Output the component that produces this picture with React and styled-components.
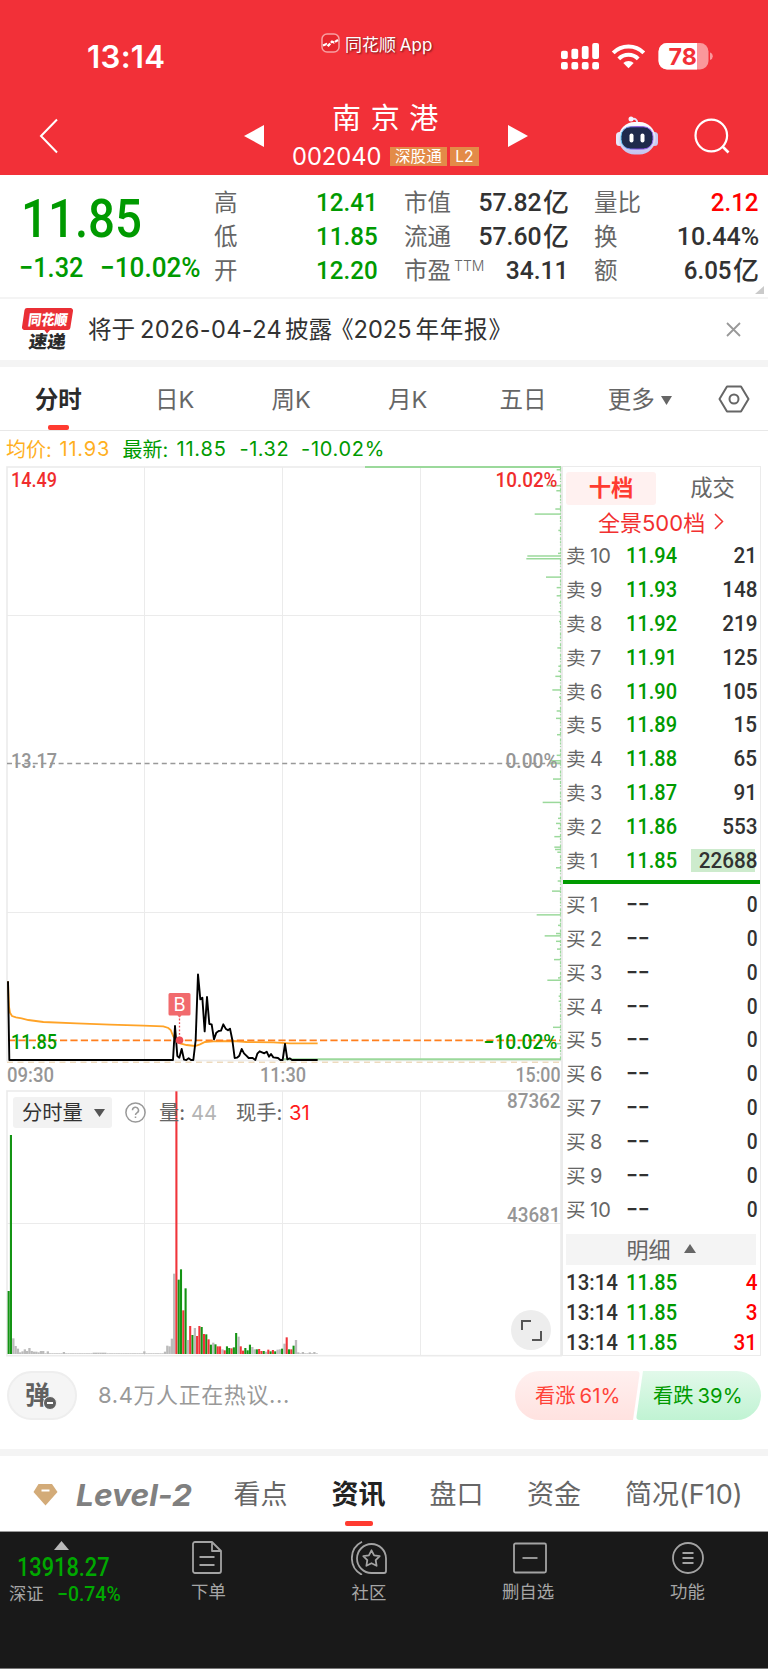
import React from "react";
import styled, { createGlobalStyle, css } from "styled-components";

const GREEN = "#009a00";
const RED = "#ff0000";
const INK = "#323232";
const MUTED = "#666666";
const LINE = "#ebebeb";
const CJK = `"Noto Sans CJK SC", sans-serif`;
const UI = `Inter, "Noto Sans CJK SC", sans-serif`;
const DIGITS = `Roboto, "Noto Sans CJK SC", sans-serif`;

const GlobalStyle = createGlobalStyle`
  * { box-sizing: border-box; }
  body { margin: 0; background: #fff; font-family: ${UI}; color: ${INK}; }
  svg { display: block; flex: none; }
`;

const Screen = styled.div`
  width: 768px;
  height: 1669px;
  display: flex;
  flex-direction: column;
  overflow: hidden;
  background: #fff;
  white-space: nowrap;
`;

const Num = styled.span`
  display: inline-block;
  font-family: ${DIGITS};
  font-weight: ${(p) => p.$weight || 500};
  font-size: ${(p) => p.$size}px;
  line-height: 1;
  color: ${(p) => p.$color || INK};
  transform: scaleX(${(p) => p.$sx || 0.87});
  transform-origin: ${(p) => p.$origin || "left"} center;
`;

/* ---------- header ---------- */
const Header = styled.header`
  height: 175px;
  flex: none;
  background: #f23038;
  color: #fff;
`;
const StatusBar = styled.div`
  height: 90px;
  display: grid;
  grid-template-columns: 87px 234px 240px 1fr;
`;
const Clock = styled.div`
  grid-column: 2;
  padding-top: 38px;
  font-size: 31.2px;
  line-height: 38px;
  letter-spacing: 0.3px;
  font-weight: 600;
`;
const AppTag = styled.div`
  display: flex;
  align-items: center;
  gap: 5px;
  height: 20px;
  margin-top: 33px;
  font-size: 17px;
  text-shadow: 1px 1px 2px rgba(0, 0, 0, 0.55);
  word-spacing: -1px;
`;
const StatusIcons = styled.div`
  padding-top: 43px;
`;
const TitleBar = styled.div`
  height: 85px;
  display: grid;
  grid-template-columns: 39px 205px 20px 244px 20px 88px 42px 80px;
`;
const IconCell = styled.div`
  grid-column: ${(p) => p.$col};
  padding-top: ${(p) => p.$top}px;
`;
const TitleBlock = styled.div`
  grid-column: 4;
  display: flex;
  flex-direction: column;
  align-items: center;
  padding-top: 8px;
`;
const StockName = styled.div`
  font: 400 29px/36px ${CJK};
  letter-spacing: 9.7px;
  margin-right: -8px;
`;
const CodeRow = styled.div`
  display: flex;
  align-items: center;
  height: 20px;
  margin: 12px 0 0 2px;
`;
const Code = styled.span`
  font-size: 23.7px;
  width: 98px;
`;
const Badge = styled.span`
  background: #e38b48;
  font-size: 15.6px;
  line-height: 19px;
  height: 19px;
  padding: 0 5px;
  margin-right: 3.5px;
`;

/* ---------- quote ---------- */
const Quote = styled.section`
  height: 124px;
  flex: none;
  display: grid;
  grid-template-columns: 214px 163.5px 26.5px 165px 25px 165px;
  border-bottom: 2px solid #f4f4f4;
  position: relative;
`;
const Price = styled.div`
  padding: 16px 0 0 21px;
`;
const Changes = styled.div`
  display: flex;
  margin-left: -2px;
  padding-top: 8px;
  ${Num}:first-child { width: 81px; }
`;
const StatCol = styled.div`
  grid-column: ${(p) => p.$col};
  padding-top: 10px;
`;
const Stat = styled.div`
  height: 34px;
  display: flex;
  align-items: center;
  justify-content: space-between;
  font: 400 23.5px/34px ${CJK};
  color: ${MUTED};
`;
const Label = styled.span`
  display: flex;
  padding-bottom: 2px;
`;
const Value = styled.span`
  display: flex;
  align-items: center;
`;
const Unit = styled.span`
  font: 500 26px/32px ${CJK};
  color: ${INK};
  margin: 0 0 2px 1px;
`;
const Sup = styled.small`
  font: 300 14px/14px ${UI};
  padding: 7px 0 0 3px;
`;
const Corner = styled.i`
  position: absolute;
  right: 4px;
  bottom: 3px;
  border-left: 9px solid transparent;
  border-bottom: 8px solid #cacaca;
`;

/* ---------- news ---------- */
const News = styled.section`
  height: 61px;
  flex: none;
  display: flex;
  align-items: center;
  padding-left: 21px;
`;
const NewsText = styled.p`
  margin: 0 0 0 14px;
  flex: 1;
  display: flex;
  align-items: center;
  font-size: 23.6px;
  line-height: 34px;
`;
const NewsPart = styled.span`
  width: ${(p) => p.$w}px;
  letter-spacing: ${(p) => p.$ls || 0}px;
`;
const CloseCell = styled.div`
  width: 42px;
`;
const Band = styled.div`
  height: 7px;
  flex: none;
  background: #f4f4f4;
`;

/* ---------- period tabs ---------- */
const Tabs = styled.nav`
  height: 64px;
  flex: none;
  display: flex;
  border-bottom: 1px solid #e8e8e8;
`;
const Tab = styled.div`
  width: ${(p) => p.$w || 116.5}px;
  display: flex;
  align-items: center;
  justify-content: center;
  flex-direction: column;
  padding-top: 16px;
  font-size: 23.5px;
  line-height: 34px;
  color: ${MUTED};
  ${(p) =>
    p.$active &&
    css`
      color: #2b2b2b;
      font-weight: 700;
    `}
  &::after {
    content: "";
    width: 21px;
    height: 5px;
    margin-top: 8px;
    border-radius: 2px;
    background: ${(p) => (p.$active ? "#ff3b30" : "transparent")};
  }
`;
const MoreLabel = styled.span`
  display: flex;
  align-items: center;
  gap: 6px;
`;
const SettingsCell = styled.div`
  padding: 18px 0 0 18px;
`;

const Legend = styled.div`
  height: 35px;
  flex: none;
  display: flex;
  align-items: center;
  padding-left: 6px;
  font-size: 20px;
  color: ${GREEN};
`;
const LegendPart = styled.span`
  width: ${(p) => p.$w}px;
  letter-spacing: ${(p) => p.$ls || 0}px;
  color: ${(p) => p.$color || GREEN};
`;

/* ---------- charts and order book ---------- */
const Main = styled.main`
  height: 892px;
  flex: none;
  display: flex;
`;
const Charts = styled.div`
  width: 562px;
  position: relative;
`;
const VolumeBar = styled.div`
  position: absolute;
  left: 13px;
  top: 631px;
  height: 31px;
  display: flex;
  align-items: center;
  font-size: 20.3px;
  line-height: 28px;
  color: #666;
`;
const VolumeSelect = styled.div`
  width: 99px;
  height: 31px;
  background: #f2f2f2;
  border-radius: 3px;
  display: flex;
  align-items: center;
  gap: 11px;
  padding-left: 9px;
  margin-right: 13px;
  color: ${INK};
`;
const VolPart = styled.span`
  width: ${(p) => p.$w}px;
  padding-left: ${(p) => p.$gap || 0}px;
  color: ${(p) => p.$color};
`;
const Expand = styled.div`
  position: absolute;
  left: 511px;
  top: 844px;
  width: 40px;
  height: 40px;
  border-radius: 50%;
  background: #ededed;
`;
const Book = styled.aside`
  width: 200px;
  height: 890px;
  border: 1px solid ${LINE};
  border-left-width: 2px;
  border-right-width: 1.5px;
  margin-left: -1px;
  display: flex;
  flex-direction: column;
  > * { flex: none; }
`;
const BookTabs = styled.div`
  display: flex;
  padding: 5px 0 0 3px;
`;
const BookTab = styled.div`
  width: ${(p) => (p.$active ? 90 : 102)}px;
  height: 33px;
  padding-left: ${(p) => (p.$active ? 0 : 11)}px;
  text-align: center;
  font: ${(p) => (p.$active ? 700 : 400)} 22.3px/29px ${CJK};
  color: ${(p) => (p.$active ? "#ff3b30" : MUTED)};
  background: ${(p) => (p.$active ? "#fff1f0" : "none")};
  border-radius: 3px;
`;
const DepthLink = styled.div`
  height: 34px;
  display: flex;
  align-items: center;
  gap: 9px;
  padding: 0 0 2px 35px;
  color: #f23030;
  font-size: 22px;
`;
const Level = styled.div`
  height: 33.9px;
  display: grid;
  grid-template-columns: 24px 36px 1fr 70px;
  align-items: center;
  padding: 0 2.5px 0 3px;
  font-size: 19.5px;
  line-height: 24px;
  color: ${MUTED};
`;
const LevelNo = styled.span`
  font-size: 20px;
`;
const Qty = styled.span`
  justify-self: end;
  height: 23px;
  width: 67px;
  display: flex;
  align-items: center;
  justify-content: flex-end;
  background: ${(p) =>
    p.$hot ? "linear-gradient(to right, #cdebcd 64px, transparent 64px)" : "none"};
`;
const Split = styled.div`
  height: 4px;
  margin: 2px 0 4px;
  background: ${GREEN};
`;
const Details = styled.div`
  height: 31px;
  margin: 7px 4px 3px 3px;
  padding-bottom: 3px;
  background: #f4f4f4;
  display: flex;
  align-items: center;
  justify-content: center;
  gap: 13px;
  font: 400 22px/28px ${CJK};
  color: ${MUTED};
  svg { margin-top: 2px; }
`;
const Trade = styled.div`
  height: 29.9px;
  display: grid;
  grid-template-columns: 60px 1fr auto;
  align-items: center;
  padding: 0 2.5px 0 3px;
`;

/* ---------- discussion strip ---------- */
const Discuss = styled.section`
  height: 91px;
  flex: none;
  display: flex;
  align-items: flex-start;
  padding: 13px 7px 0;
`;
const Danmu = styled.div`
  width: 70px;
  height: 49px;
  border: 2px solid #eeeeee;
  border-radius: 25px;
  background: #f5f5f5;
  position: relative;
  padding-left: 16px;
  font: 700 25px/41px ${CJK};
  color: #606060;
`;
const Minus = styled.i`
  position: absolute;
  left: 34px;
  top: 23px;
  width: 14px;
  height: 14px;
  border-radius: 50%;
  background: #606060;
  border: 1px solid #f5f5f5;
  &::after {
    content: "";
    display: block;
    width: 6px;
    height: 2px;
    margin: 5px 3px;
    background: #fff;
  }
`;
const Talk = styled.div`
  flex: 1;
  padding-left: 21px;
  font-size: 22px;
  line-height: 49px;
  letter-spacing: 0.6px;
  color: #999;
`;
const Vote = styled.div`
  width: 125px;
  height: 49px;
  display: flex;
  gap: 4px;
  line-height: 50px;
  font-size: 20.3px;
  padding-left: ${(p) => (p.$up ? 20 : 17)}px;
  color: ${(p) => (p.$up ? "#ff4238" : GREEN)};
  background: ${(p) =>
    p.$up ? "linear-gradient(#fff0ef, #ffe2e0)" : "linear-gradient(#e2f9ea, #c0f3d3)"};
  border-radius: ${(p) => (p.$up ? "25px 4px 4px 25px" : "4px 25px 25px 4px")};
  clip-path: ${(p) =>
    p.$up ? "polygon(0 0, 100% 0, 118px 100%, 0 100%)" : "polygon(7px 0, 100% 0, 100% 100%, 0 100%)"};
  margin-left: ${(p) => (p.$up ? 0 : -4)}px;
`;

/* ---------- bottom tabs ---------- */
const InfoTabs = styled.nav`
  height: 76px;
  flex: none;
  display: grid;
  grid-template-columns: 33px 43px 157.5px 98px 98px 97.5px 98px 1fr;
  border-bottom: 1px solid #999;
  padding-top: 18px;
  font-size: 27px;
  line-height: 42px;
  color: ${MUTED};
`;
const Level2 = styled.div`
  font: italic 700 30.5px/42px ${UI};
  color: #808080;
  transform: scaleX(1.04);
  transform-origin: left;
`;
const InfoTab = styled.div`
  ${(p) =>
    p.$active &&
    css`
      color: #222;
      font-weight: 700;
      &::after {
        content: "";
        display: block;
        width: 28px;
        height: 5px;
        margin: 5px 0 0 13px;
        border-radius: 2px;
        background: #ff3b30;
      }
    `}
`;

/* ---------- footer ---------- */
const Footer = styled.footer`
  height: 137px;
  flex: none;
  background: #191919;
  border-bottom: 1px solid #777;
  display: grid;
  grid-template-columns: 128px 161px 160px 158px 161px;
  color: #a6a6a6;
`;
const IndexCell = styled.div`
  display: flex;
  flex-direction: column;
  padding-top: 9px;
`;
const IndexMark = styled.div`
  padding-left: 54px;
`;
const IndexValue = styled.div`
  padding: 5px 0 1px 17px;
  height: 32px;
`;
const IndexRow = styled.div`
  display: flex;
  align-items: center;
  padding-left: 9px;
  font-size: 17.3px;
  line-height: 24px;
`;
const IndexName = styled.span`
  width: 48px;
`;
const FootItem = styled.div`
  padding-top: 9px;
  display: flex;
  flex-direction: column;
  align-items: center;
  gap: 4px;
  font: 400 17.4px/26px ${CJK};
  svg { margin-left: ${(p) => p.$shift}px; }
`;

const BOOK = [
  ["10", "11.94", "21"], ["9", "11.93", "148"], ["8", "11.92", "219"], ["7", "11.91", "125"],
  ["6", "11.90", "105"], ["5", "11.89", "15"], ["4", "11.88", "65"], ["3", "11.87", "91"],
  ["2", "11.86", "553"], ["1", "11.85", "22688"],
];
const STATS = [
  [2, [
    { label: "高", value: "12.41", color: GREEN },
    { label: "低", value: "11.85", color: GREEN },
    { label: "开", value: "12.20", color: GREEN },
  ]],
  [4, [
    { label: "市值", value: "57.82", unit: "亿", sx: 0.935 },
    { label: "流通", value: "57.60", unit: "亿", sx: 0.935 },
    { label: "市盈", value: "34.11", sup: "TTM", sx: 0.93 },
  ]],
  [6, [
    { label: "量比", value: "2.12", color: RED },
    { label: "换", value: "10.44%", sx: 0.945 },
    { label: "额", value: "6.05", unit: "亿" },
  ]],
];

/* chart coordinates are stored in thirds of a pixel */
const third = (pts) => pts.map(([x, y]) => `${x / 3},${960 + y / 3}`).join(" ");
const PRICE = [
  [24, 64], [28, 300], [519, 300], [525, 198], [532, 288], [538, 293], [545, 267], [552, 299],
  [559, 300], [566, 295], [573, 300], [580, 300], [587, 240], [594, 43], [601, 118], [607, 113],
  [614, 214], [621, 111], [628, 192], [635, 193], [642, 238], [649, 218], [656, 213], [663, 212],
  [670, 193], [677, 206], [684, 211], [690, 206], [697, 240], [704, 294], [711, 293], [718, 287],
  [725, 267], [732, 280], [739, 287], [746, 294], [758, 294], [766, 300], [772, 281], [779, 274],
  [786, 277], [793, 280], [800, 275], [807, 290], [813, 282], [820, 292], [834, 294], [841, 300],
  [848, 300], [855, 252], [862, 298], [869, 295], [876, 300], [953, 300],
];
const AVERAGE = [
  [24, 64], [27, 140], [30, 158], [36, 168], [48, 172], [65, 175], [85, 180], [130, 186],
  [230, 190], [330, 194], [430, 197], [490, 199], [505, 204], [512, 210], [520, 230], [528, 240],
  [540, 250], [560, 255], [585, 258], [600, 253], [615, 246], [640, 244], [700, 243], [740, 246],
  [820, 247], [870, 250], [953, 250],
];
/* chip distribution: [row, left end] */
const TICKS = [
  [25, 170], [66, 139], [79, 169], [126, 166], [139, 104], [181, 175], [240, 174], [247, 82],
  [254, 79], [301, 138], [328, 170], [349, 170], [367, 178], [390, 176], [415, 177], [483, 172],
  [530, 175], [543, 175], [556, 166], [591, 157], [610, 177], [645, 170], [664, 168], [706, 171],
  [759, 170], [773, 152], [779, 150], [820, 159], [880, 128], [921, 174], [934, 168], [947, 174],
  [968, 163], [995, 163], [1001, 165], [1008, 172], [1048, 168], [1082, 173], [1108, 156],
  [1169, 110], [1196, 174], [1217, 168], [1223, 134], [1237, 168], [1257, 171], [1284, 162],
  [1331, 174], [1337, 142], [1378, 176], [1391, 176], [1458, 159], [1500, 170],
];
const OPENING = [
  ["g", 633], ["g", 165], ["n", 775], ["n", 798], ["n", 806], ["n", 817], ["n", 814], ["n", 808],
  ["n", 813], ["n", 804], ["n", 813], ["n", 815], ["n", 815], ["n", 817], ["n", 813], ["n", 813],
  ["n", 820], ["n", 814],
];
const QUIET = Array.from({ length: 50 }, (_, i) => [
  "n", i === 6 ? 816 : i === 41 ? 814 : i > 18 && i < 25 ? 818 : 820,
]);
const ACTIVE = [
  ["n", 815], ["n", 797], ["n", 799], ["n", 776], ["n", 581], ["r", 34], ["g", 599], ["g", 568],
  ["r", 691], ["g", 625], ["n", 780], ["r", 738], ["g", 765], ["n", 744], ["r", 768], ["r", 738],
  ["g", 741], ["r", 762], ["g", 763], ["r", 778], ["g", 794], ["n", 788], ["g", 793], ["r", 799],
  ["r", 799], ["n", 808], ["r", 811], ["g", 799], ["g", 804], ["r", 805], ["g", 802], ["g", 759],
  ["n", 770], ["r", 799], ["r", 812], ["g", 804], ["g", 811], ["g", 794], ["n", 801], ["n", 808],
  ["g", 808], ["r", 807], ["r", 813], ["g", 813], ["n", 815], ["r", 809], ["g", 814], ["r", 810],
  ["g", 814], ["n", 809], ["n", 808], ["g", 806], ["n", 791], ["r", 772], ["g", 808], ["r", 808],
  ["g", 797], ["n", 780], ["n", 817], ["n", 820], ["n", 816], ["n", 820], ["n", 820], ["n", 817],
  ["n", 820], ["n", 816], ["n", 820],
];
const VOLUME = [...OPENING, ...QUIET, ...ACTIVE];
const BAR = { g: "#149414", r: "#f0353b", n: "#bbbbbb" };

const Plot = styled.svg`
  overflow: visible;
`;
const AxisText = styled.text`
  font: 500 20.5px ${DIGITS};
  fill: ${(p) => p.$fill || "#969696"};
`;
const Axis = ({ x, y, w, fill, end, children }) => (
  <AxisText
    x={end ? x - w : x}
    y={y}
    $fill={fill}
    textLength={w}
    lengthAdjust="spacingAndGlyphs"
  >
    {children}
  </AxisText>
);

const Grid = ({ top, bottom, rows }) => (
  <g stroke={LINE} fill="none">
    <rect x="7" y={top} width="554" height={bottom - top} strokeWidth="1.6" />
    {[144.5, 282.5, 420.5].map((x) => (
      <line key={x} x1={x} x2={x} y1={top} y2={bottom} />
    ))}
    {rows.map((y) => (
      <line key={y} x1="7" x2="561" y1={y} y2={y} />
    ))}
  </g>
);

const PriceChart = () => (
  <Plot width="562" height="624" viewBox="0 466 562 624">
    <Grid top={467} bottom={1060.5} rows={[615.5, 912.5]} />
    <path d="M7 763.5H561" stroke="#999" strokeWidth="1.5" strokeDasharray="5 3.6" />
    <g stroke="#9bd99b" strokeWidth="1.5">
      <path d="M365 467H561" strokeWidth="2" />
      <path d="M284 1059.3H561" strokeWidth="2" />
      <path d="M560.5 467V1060" strokeDasharray="2 1.4 1 2.2 3 1" strokeWidth="1.2" />
      {TICKS.map(([y, x]) => (
        <path key={y} d={`M${500 + x / 3} ${460 + y / 2.57}H561`} />
      ))}
    </g>
    <path d="M7 1062.2H560" stroke="#e6caa0" strokeDasharray="6 4.5" />
    <Axis x={11} y={486.5} w={46} fill="#f02d2d">14.49</Axis>
    <Axis x={557.5} y={486.5} w={62} fill="#f02d2d" end>10.02%</Axis>
    <Axis x={11} y={767.5} w={46}>13.17</Axis>
    <Axis x={557.5} y={767.5} w={52} end>0.00%</Axis>
    <polyline points={third(AVERAGE)} fill="none" stroke="#ffa327" strokeWidth="1.8" />
    <path d="M8 1040.3H560" stroke="#ff7f1e" strokeWidth="1.8" strokeDasharray="7.2 3.2" />
    <polyline points={third(PRICE)} fill="none" stroke="#000" strokeWidth="1.9" strokeLinejoin="round" />
    <Axis x={11} y={1048.5} w={46} fill={GREEN}>11.85</Axis>
    <Axis x={557.5} y={1048.5} w={74} fill={GREEN} end>−10.02%</Axis>
    <path d="M179.5 1015V1038" stroke="#ef4d55" strokeWidth="1.3" strokeDasharray="1.8 1.8" />
    <path d="M170 993h19a1.5 1.5 0 0 1 1.5 1.5v19.5a1.5 1.5 0 0 1-1.5 1.5h-7.5l-2 2-2-2h-7.5a1.5 1.5 0 0 1-1.5-1.5v-19.5a1.5 1.5 0 0 1 1.5-1.5z" fill="#f16a6d" />
    <text x="179.5" y="1010.8" textAnchor="middle" fill="#fff" fontFamily="Inter" fontSize="18.5">B</text>
    <circle cx="179.5" cy="1040.3" r="3.8" fill="#ef4d55" />
    <Axis x={7} y={1082} w={47}>09:30</Axis>
    <Axis x={260} y={1082} w={46}>11:30</Axis>
    <Axis x={560.5} y={1082} w={45} end>15:00</Axis>
  </Plot>
);

const VolumeChart = () => (
  <Plot width="562" height="268" viewBox="0 1090 562 268">
    <Grid top={1091} bottom={1355.7} rows={[1223.5]} />
    {VOLUME.map(([kind, top], i) => (
      <rect
        key={i}
        x={7.6 + i * 2.298}
        y={1080 + top / 3}
        width={kind === "n" ? 2.3 : 2.1}
        height={(822 - top) / 3}
        fill={BAR[kind]}
      />
    ))}
    <Axis x={560.5} y={1107.5} w={53.5} end>87362</Axis>
    <Axis x={560.5} y={1222} w={53.5} end>43681</Axis>
  </Plot>
);

const Down = ({ w, h, color }) => (
  <svg width={w} height={h} viewBox="0 0 10 10" preserveAspectRatio="none">
    <path d="M0 0H10L5 10Z" fill={color} />
  </svg>
);
const Up = ({ w, h, color }) => (
  <svg width={w} height={h} viewBox="0 0 10 10" preserveAspectRatio="none">
    <path d="M5 0L10 10H0Z" fill={color} />
  </svg>
);

const Indicators = () => (
  <svg width="155" height="28" viewBox="0 0 155 28">
    <g fill="#fff">
      {[7.8, 5.8, 3, 0].map((y, i) => (
        <g key={y}>
          <rect x={i * 10.4} y={y} width="6.8" height={16 - y} rx="2" />
          <rect x={i * 10.4} y="19" width="6.8" height="7.5" rx="2" />
        </g>
      ))}
      <path d="M67.5 25.2l-5.2-5.2a7.6 7.6 0 0 1 10.4 0z" />
    </g>
    <g fill="none" stroke="#fff" strokeWidth="4">
      <path d="M52.2 9.8a21.6 21.6 0 0 1 30.6 0" />
      <path d="M57.8 15.8a13.8 13.8 0 0 1 19.4 0" />
    </g>
    <rect x="97.5" y="0" width="50" height="26.6" rx="8.5" fill="#fa989b" />
    <path d="M106 0H136V26.6H106a8.5 8.5 0 0 1-8.5-8.5V8.5a8.5 8.5 0 0 1 8.5-8.5z" fill="#fff" />
    <path d="M149 9.5a4 4 0 0 1 0 7.6z" fill="#fa989b" />
    <text x="121.7" y="21.8" textAnchor="middle" fontFamily="Inter" fontWeight="700" fontSize="23.2" fill="#f23038">78</text>
  </svg>
);

const Robot = () => (
  <svg width="42" height="40" viewBox="0 0 42 40">
    <defs>
      <linearGradient id="shell" x1="0" y1="0" x2="0" y2="1">
        <stop offset="0" stopColor="#fff" />
        <stop offset="1" stopColor="#c3c2ee" />
      </linearGradient>
      <linearGradient id="rim" x1="0" y1="0" x2="1" y2="0">
        <stop offset="0" stopColor="#63c8f4" />
        <stop offset="0.5" stopColor="#7b3fe0" />
        <stop offset="1" stopColor="#9e6cf0" />
      </linearGradient>
    </defs>
    <path d="M15 3.5c4-1.5 6-.5 6.5 4" fill="none" stroke="#e4e2fa" strokeWidth="2" />
    <circle cx="15" cy="3" r="2.5" fill="#f4f3ff" />
    <rect x="0" y="16" width="7" height="14" rx="3.5" fill="#e9e8fb" />
    <rect x="35" y="16" width="7" height="14" rx="3.5" fill="#c9c9f2" />
    <rect x="2.5" y="6" width="37" height="32.5" rx="16" fill="url(#shell)" />
    <rect x="5" y="10.8" width="32" height="22.2" rx="9.5" fill="#1f2a4c" stroke="url(#rim)" strokeWidth="1" />
    <rect x="13.5" y="17.5" width="4" height="9" rx="2" fill="#fff" />
    <rect x="24.5" y="17.5" width="4" height="9" rx="2" fill="#fff" />
  </svg>
);

const BrandLogo = () => (
  <svg width="53" height="46" viewBox="0 0 53 46">
    <path d="M6 1h43.5a2.5 2.5 0 0 1 2.5 3l-2.7 17a2.5 2.5 0 0 1-2.5 2H29l-3 3.5-2.6-3.5H3.5a2.5 2.5 0 0 1-2.5-3l2.5-17a2.5 2.5 0 0 1 2.5-2z" fill="#ea2f35" />
    <g fontFamily="Noto Sans CJK SC" fontWeight="900">
      <text transform="translate(6.5 17.5) skewX(-8)" fontSize="14.5" textLength="39.5" lengthAdjust="spacingAndGlyphs" fill="#fff">同花顺</text>
      <text transform="translate(7 41) skewX(-8)" fontSize="17.5" textLength="37" lengthAdjust="spacingAndGlyphs" fill="#2b2b2b">速递</text>
    </g>
  </svg>
);

const stroke = { fill: "none", stroke: "#a3a3a3", strokeWidth: 1.8, strokeLinejoin: "round" };
const OrderIcon = () => (
  <svg width="30" height="33" viewBox="0 0 30 33" {...stroke}>
    <path d="M3 1h17l9 9v20a2 2 0 0 1-2 2H3a2 2 0 0 1-2-2V3a2 2 0 0 1 2-2zM20 1v9h9M7.5 16h15M7.5 24h15" />
  </svg>
);
const CommunityIcon = () => (
  <svg width="36" height="34" viewBox="0 0 36 34" {...stroke}>
    <path d="M20.5 3a14.5 14.5 0 0 1 14.5 14.5v12.5a2 2 0 0 1-2 2H20.5A14.5 14.5 0 0 1 20.5 3z" />
    <path d="M20.5 9.3l2.6 5 5.6.9-4 4 .9 5.6-5.1-2.6-5.1 2.6.9-5.6-4-4 5.6-.9z" />
    <path d="M11 .8a18.5 18.5 0 0 0 0 33" />
  </svg>
);
const RemoveIcon = () => (
  <svg width="34" height="33" viewBox="0 0 34 33" {...stroke}>
    <rect x="1" y="2.5" width="32" height="29" rx="1.5" />
    <path d="M9.5 17h15" />
  </svg>
);
const MenuIcon = () => (
  <svg width="32" height="33" viewBox="0 0 32 33" {...stroke}>
    <circle cx="16" cy="17" r="15" />
    <path d="M10.5 12h11M10.5 17h11M10.5 22h11" />
  </svg>
);
const FOOT = [
  ["下单", OrderIcon, -4],
  ["社区", CommunityIcon, 0],
  ["删自选", RemoveIcon, 3],
  ["功能", MenuIcon, 0],
];

export default function App() {
  return (
    <Screen>
      <GlobalStyle />
      <Header>
        <StatusBar>
          <Clock>13:14</Clock>
          <AppTag>
            <svg width="19" height="20" viewBox="0 0 19 20">
              <rect x="1" y="1" width="17" height="18" rx="5" fill="#e6262e" stroke="#f8a0a2" strokeWidth="1.5" />
              <path d="M2 12.5l3.5-1.5 2 1.5 3.5-4 2 1L17 7" fill="none" stroke="#fff" strokeWidth="2.2" strokeDasharray="4 1" />
            </svg>
            <span>同花顺 App</span>
          </AppTag>
          <StatusIcons><Indicators /></StatusIcons>
        </StatusBar>
        <TitleBar>
          <IconCell $col={2} $top={28}>
            <svg width="20" height="36" viewBox="0 0 20 36" fill="none" stroke="#fff" strokeWidth="2">
              <path d="M18 1.5L2 18 18 34.5" />
            </svg>
          </IconCell>
          <IconCell $col={3} $top={35}>
            <svg width="20" height="22" viewBox="0 0 20 22"><path d="M20 0V22L0 11Z" fill="#fff" /></svg>
          </IconCell>
          <TitleBlock>
            <StockName>南京港</StockName>
            <CodeRow>
              <Code>002040</Code>
              <Badge>深股通</Badge>
              <Badge>L2</Badge>
            </CodeRow>
          </TitleBlock>
          <IconCell $col={5} $top={35}>
            <svg width="20" height="22" viewBox="0 0 20 22"><path d="M0 0V22L20 11Z" fill="#fff" /></svg>
          </IconCell>
          <IconCell $col={7} $top={26}><Robot /></IconCell>
          <IconCell $col={8} $top={28}>
            <svg width="76" height="38" viewBox="0 0 76 38" fill="none" stroke="#fff" strokeWidth="2.2">
              <circle cx="53.3" cy="17.5" r="15.8" />
              <path d="M64.5 28.5L70.5 34.5" strokeWidth="2.6" />
            </svg>
          </IconCell>
        </TitleBar>
      </Header>

      <Quote>
        <Price>
          <Num $size={54.5} $sx={0.87} $color={GREEN}>11.85</Num>
          <Changes>
            <Num $size={27.5} $sx={0.92} $color={GREEN}>−1.32</Num>
            <Num $size={27.5} $sx={0.95} $color={GREEN}>−10.02%</Num>
          </Changes>
        </Price>
        {STATS.map(([col, rows]) => (
          <StatCol $col={col} key={col}>
            {rows.map(({ label, value, color, sup, unit, sx }) => (
              <Stat key={label}>
                <Label>{label}{sup && <Sup>{sup}</Sup>}</Label>
                <Value>
                  <Num $size={26.5} $sx={sx || 0.91} $color={color} $origin="right">{value}</Num>
                  {unit && <Unit>{unit}</Unit>}
                </Value>
              </Stat>
            ))}
          </StatCol>
        ))}
        <Corner />
      </Quote>

      <News>
        <BrandLogo />
        <NewsText>
          <NewsPart $w={52}>将于</NewsPart>
          <NewsPart $w={145} $ls={0.35}>2026-04-24</NewsPart>
          <NewsPart $w={45}>披露</NewsPart>
          <NewsPart $w={23.5}>《</NewsPart>
          <NewsPart $w={62}>2025</NewsPart>
          <NewsPart $ls={0.7}>年年报》</NewsPart>
        </NewsText>
        <CloseCell>
          <svg width="15" height="15" viewBox="0 0 15 15" stroke="#999" strokeWidth="1.8">
            <path d="M1 1L14 14M14 1L1 14" />
          </svg>
        </CloseCell>
      </News>
      <Band />

      <Tabs>
        <Tab $active>分时</Tab>
        <Tab>日K</Tab>
        <Tab>周K</Tab>
        <Tab>月K</Tab>
        <Tab $w={114}>五日</Tab>
        <Tab $w={119.5}><MoreLabel>更多<Down w={11} h={9} color="#666" /></MoreLabel></Tab>
        <SettingsCell>
          <svg width="32" height="28" viewBox="0 0 32 28" fill="none" stroke="#666" strokeWidth="2">
            <path d="M9 1.5h14L30.5 14 23 26.5H9L1.5 14z" strokeLinejoin="round" />
            <circle cx="16" cy="14" r="4.5" />
          </svg>
        </SettingsCell>
      </Tabs>

      <Legend>
        <LegendPart $w={53.5} $color="#ffb01f">均价:</LegendPart>
        <LegendPart $w={63} $ls={0.8} $color="#ffb01f">11.93</LegendPart>
        <LegendPart $w={54}>最新:</LegendPart>
        <LegendPart $w={63} $ls={0.8}>11.85</LegendPart>
        <LegendPart $w={61.5} $ls={0.5}>-1.32</LegendPart>
        <LegendPart $ls={0.7}>-10.02%</LegendPart>
      </Legend>

      <Main>
        <Charts>
          <PriceChart />
          <VolumeChart />
          <VolumeBar>
            <VolumeSelect>分时量<Down w={11} h={8} color="#555" /></VolumeSelect>
            <svg width="21" height="21" viewBox="0 0 21 21" fill="none" stroke="#999" strokeWidth="1.5">
              <circle cx="10.5" cy="10.5" r="9.6" />
              <path d="M7.5 8.3a3 3 0 1 1 4.4 2.6c-1 .6-1.4 1-1.4 2.1M10.5 14.5v1.6" />
            </svg>
            <VolPart $w={45} $gap={13}>量:</VolPart>
            <VolPart $w={45} $color="#b4b4b4">44</VolPart>
            <VolPart $w={53}>现手:</VolPart>
            <VolPart $color="#ff1a1a">31</VolPart>
          </VolumeBar>
          <Expand>
            <svg width="40" height="40" viewBox="0 0 40 40" fill="none" stroke="#555" strokeWidth="2">
              <path d="M11 20V11H20M30 21V30H21" />
            </svg>
          </Expand>
        </Charts>

        <Book>
          <BookTabs>
            <BookTab $active>十档</BookTab>
            <BookTab>成交</BookTab>
          </BookTabs>
          <DepthLink>
            <span>全景500档</span>
            <svg width="10" height="17" viewBox="0 0 10 17" fill="none" stroke="#f23030" strokeWidth="1.5">
              <path d="M1 1L8.5 8.5 1 16" />
            </svg>
          </DepthLink>
          {BOOK.map(([n, price, qty]) => (
            <Level key={n}>
              <span>卖</span>
              <LevelNo>{n}</LevelNo>
              <Num $size={22} $sx={0.91} $color={GREEN}>{price}</Num>
              <Qty $hot={n === "1"}><Num $size={22} $sx={0.94} $origin="right">{qty}</Num></Qty>
            </Level>
          ))}
          <Split />
          {BOOK.map((_, i) => (
            <Level key={i}>
              <span>买</span>
              <LevelNo>{i + 1}</LevelNo>
              <Num $size={22} $sx={0.95}>−−</Num>
              <Qty><Num $size={22} $sx={0.87} $origin="right">0</Num></Qty>
            </Level>
          ))}
          <Details>明细<Up w={12} h={9} color="#666" /></Details>
          {["4", "3", "31"].map((q) => (
            <Trade key={q}>
              <Num $size={22} $sx={0.93}>13:14</Num>
              <Num $size={22} $sx={0.91} $color={GREEN}>11.85</Num>
              <Num $size={22} $sx={0.94} $color={RED} $origin="right">{q}</Num>
            </Trade>
          ))}
        </Book>
      </Main>

      <Discuss>
        <Danmu>弹<Minus /></Danmu>
        <Talk>8.4万人正在热议...</Talk>
        <Vote $up><span>看涨</span><span>61%</span></Vote>
        <Vote><span>看跌</span><span>39%</span></Vote>
      </Discuss>
      <Band />

      <InfoTabs>
        <span />
        <svg width="25" height="42" viewBox="0 0 25 42">
          <path d="M5.5 10h13.5L24.5 18 12.5 31.5.5 18z" fill="#d3ab78" />
          <path d="M8.5 16.5h8" stroke="#fff" strokeWidth="2" />
        </svg>
        <Level2>Level-2</Level2>
        <InfoTab>看点</InfoTab>
        <InfoTab $active>资讯</InfoTab>
        <InfoTab>盘口</InfoTab>
        <InfoTab>资金</InfoTab>
        <InfoTab>简况(F10)</InfoTab>
      </InfoTabs>

      <Footer>
        <IndexCell>
          <IndexMark><Up w={15} h={9} color="#b8b8b8" /></IndexMark>
          <IndexValue><Num $size={25} $sx={0.87} $color="#00a800">13918.27</Num></IndexValue>
          <IndexRow>
            <IndexName>深证</IndexName>
            <Num $size={20} $sx={0.97} $color="#00a800">−0.74%</Num>
          </IndexRow>
        </IndexCell>
        {FOOT.map(([label, Icon, shift]) => (
          <FootItem key={label} $shift={shift}><Icon />{label}</FootItem>
        ))}
      </Footer>
    </Screen>
  );
}
